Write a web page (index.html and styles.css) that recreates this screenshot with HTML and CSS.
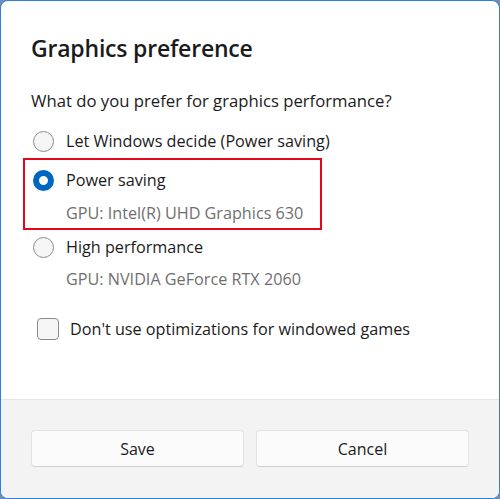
FILE: index.html
```html
<!DOCTYPE html>
<html>
<head>
<meta charset="utf-8">
<link rel="stylesheet" href="styles.css">
</head>
<body>
<div class="window">
  <div class="content">
    <h1 class="title">Graphics preference</h1>
    <p class="question">What do you prefer for graphics performance?</p>
    <div class="option first">
      <span class="radio"></span>
      <span class="label">Let Windows decide (Power saving)</span>
    </div>
    <div class="highlight">
      <div class="option">
        <span class="radio checked"></span>
        <span class="label">Power saving</span>
      </div>
      <div class="sub">GPU: Intel(R) UHD Graphics 630</div>
    </div>
    <div class="option third">
      <span class="radio"></span>
      <span class="label">High performance</span>
    </div>
    <div class="sub">GPU: NVIDIA GeForce RTX 2060</div>
    <div class="check-row">
      <span class="checkbox"></span>
      <span class="label">Don't use optimizations for windowed games</span>
    </div>
  </div>
  <div class="footer">
    <button class="btn">Save</button>
    <button class="btn">Cancel</button>
  </div>
</div>
</body>
</html>
```
FILE: styles.css
```css
html, body {
  margin: 0;
  padding: 0;
  background: #6f8fb4;
}
body {
  width: 500px;
  height: 499px;
  font-family: "Open Sans", "Noto Sans", sans-serif;
  color: #1b1b1b;
}
.window {
  box-sizing: border-box;
  width: 500px;
  height: 499px;
  border: 1px solid #2f7fd4;
  border-radius: 8px;
  background: #ffffff;
  display: flex;
  flex-direction: column;
  overflow: hidden;
}
.content {
  flex: 1;
  padding: 31px 30px 0 30px;
}
.title {
  margin: 0;
  font-size: 23px;
  font-weight: 600;
  line-height: 32px;
  letter-spacing: -0.2px;
}
.question {
  margin: 26px 0 0 0;
  font-size: 16.7px;
  line-height: 22px;
}
.option {
  display: flex;
  align-items: center;
  height: 36px;
}
.option.first {
  margin-top: 11px;
}
.option.third {
  margin-top: -1px;
}
.radio {
  box-sizing: border-box;
  width: 21px;
  height: 21px;
  border-radius: 50%;
  border: 1px solid #8b8b8b;
  background: #f5f5f5;
  margin-left: 2px;
  margin-right: 12px;
  flex: none;
}
.radio.checked {
  border: 6px solid #0067c0;
  background: #ffffff;
}
.label {
  font-size: 16.2px;
  line-height: 22px;
}
.highlight {
  box-sizing: border-box;
  width: 299px;
  border: 2px solid #e3061c;
  margin-top: -1px;
  margin-left: -8px;
  padding: 2px 0 4px 7px;
}
.highlight .radio {
  margin-left: 1px;
}
.sub {
  font-size: 16.2px;
  line-height: 22px;
  color: #6f6f6f;
  padding-left: 35px;
  margin-top: 3px;
}
.highlight .sub {
  padding-left: 34px;
  margin-top: 4px;
}
.check-row {
  display: flex;
  align-items: center;
  margin-top: 28px;
}
.checkbox {
  box-sizing: border-box;
  width: 22px;
  height: 22px;
  border-radius: 4px;
  border: 1px solid #8b8b8b;
  background: #f5f5f5;
  margin-left: 6px;
  margin-right: 11px;
  flex: none;
}
.footer {
  height: 99px;
  box-sizing: border-box;
  background: #f3f3f3;
  border-top: 1px solid #e5e5e5;
  display: flex;
  gap: 12px;
  padding: 30px 30px 0 30px;
}
.btn {
  flex: 1;
  height: 37px;
  border: 1px solid #e3e3e3;
  border-bottom-color: #cfcfcf;
  border-radius: 4px;
  background: #fbfbfb;
  font-family: inherit;
  font-size: 16px;
  color: #1b1b1b;
}
```
